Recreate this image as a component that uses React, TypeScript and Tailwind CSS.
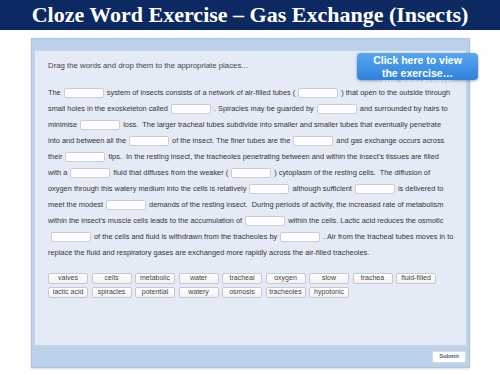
import React from "react";

type Part = string | null;

// null marks a drop target
const lines: Part[][] = [
  ["The", null, "system of insects consists of a network of air-filled tubes (", null, ") that open to the outside through"],
  ["small holes in the exoskeleton called", null, ". Spiracles may be guarded by", null, "and surrounded by hairs to"],
  ["minimise", null, "loss.  The larger tracheal tubes subdivide into smaller and smaller tubes that eventually penetrate"],
  ["into and between all the", null, "of the insect. The finer tubes are the", null, "and gas exchange occurs across"],
  ["their", null, "tips.  In the resting insect, the tracheoles penetrating between and within the insect\u2019s tissues are filled"],
  ["with a", null, "fluid that diffuses from the weaker (", null, ") cytoplasm of the resting cells.  The diffusion of"],
  ["oxygen through this watery medium into the cells is relatively", null, "although sufficient", null, "is delivered to"],
  ["meet the modest", null, "demands of the resting insect.  During periods of activity, the increased rate of metabolism"],
  ["within the insect\u2019s muscle cells leads to the accumulation of", null, "within the cells. Lactic acid reduces the osmotic"],
  [null, "of the cells and fluid is withdrawn from the tracheoles by", null, ". Air from the tracheal tubes moves in to"],
  ["replace the fluid and respiratory gases are exchanged more rapidly across the air-filled tracheoles."],
];

const words = [
  "valves", "cells", "metabolic", "water", "tracheal", "oxygen", "slow", "trachea", "fluid-filled",
  "lactic acid", "spiracles", "potential", "watery", "osmosis", "tracheoles", "hypotonic",
];

function Blank() {
  return (
    <span className="mx-[3px] inline-block h-[10px] w-[40px] rounded-[2px] border border-[#c9ced6] bg-white align-middle" />
  );
}

export default function App() {
  return (
    <div
      className="relative h-[375px] w-[500px] overflow-hidden bg-white"
      style={{ fontFamily: '"Liberation Sans", Arial, sans-serif' }}
    >
      {/* TITLE BAR */}
      <div className="flex h-[30px] items-center justify-center bg-[#0c2a61]">
        <h1
          className="text-[22px] font-bold leading-none text-white"
          style={{ fontFamily: '"Liberation Serif", "Times New Roman", serif' }}
        >
          Cloze Word Exercise – Gas Exchange (Insects)
        </h1>
      </div>

      {/* EXERCISE FRAME */}
      <div className="ml-[31px] mt-[8px] flex h-[330px] w-[439px] flex-col border border-[#aec3de] bg-[#bdd1ea] px-[2px] pt-[11px] shadow-[0_1px_2px_rgba(0,0,0,0.15)]">
        <div className="h-[297px] border border-[#c5d3e7] bg-[#e5ebf6] pl-[13px] pt-[10px] text-[#333]">
          <p className="text-[7.8px] leading-[10px] text-[#444]">
            Drag the words and drop them to the appropriate places...
          </p>

          <div className="mt-[14px] text-[7.4px] leading-[16px]">
            {lines.map((line, i) => (
              <div key={i} className="h-[16px] whitespace-pre">
                {line.map((part, j) =>
                  part === null ? <Blank key={j} /> : <span key={j}>{part}</span>
                )}
              </div>
            ))}
          </div>

          <div className="mt-[12px] flex w-[410px] flex-wrap gap-x-[3.5px] gap-y-[3px]">
            {words.map((w) => (
              <span
                key={w}
                className="flex h-[11px] w-[40px] items-center justify-center rounded-[2px] border border-[#c4c9d0] bg-gradient-to-b from-white to-[#f1f2f4] text-[7px] text-[#444]"
              >
                {w}
              </span>
            ))}
          </div>
        </div>

        <div className="flex h-[21px] items-center justify-end pr-[1px]">
          <button className="h-[12px] w-[34px] rounded-[2px] border border-[#d3dbe6] bg-white text-[5.8px] font-bold text-[#44628c]">
            Submit
          </button>
        </div>
      </div>

      {/* CALL-OUT, with its faded reflection */}
      <div className="absolute left-[357px] top-[53px] flex h-[27px] w-[121px] flex-col items-center justify-center rounded-[4px] bg-gradient-to-b from-[#58a6f0] to-[#2f82dc] text-[10.5px] font-bold leading-[12.5px] text-white shadow-[0_1px_3px_rgba(0,0,0,0.35)]">
        <span>Click here to view</span>
        <span>the exercise…</span>
      </div>
      <div className="absolute left-[357px] top-[77px] h-[12px] w-[121px] scale-y-[-0.65] text-center text-[10.5px] font-bold leading-[12px] text-white/60 [mask-image:linear-gradient(to_top,black_20%,transparent_85%)]">
        the exercise…
      </div>
    </div>
  );
}
